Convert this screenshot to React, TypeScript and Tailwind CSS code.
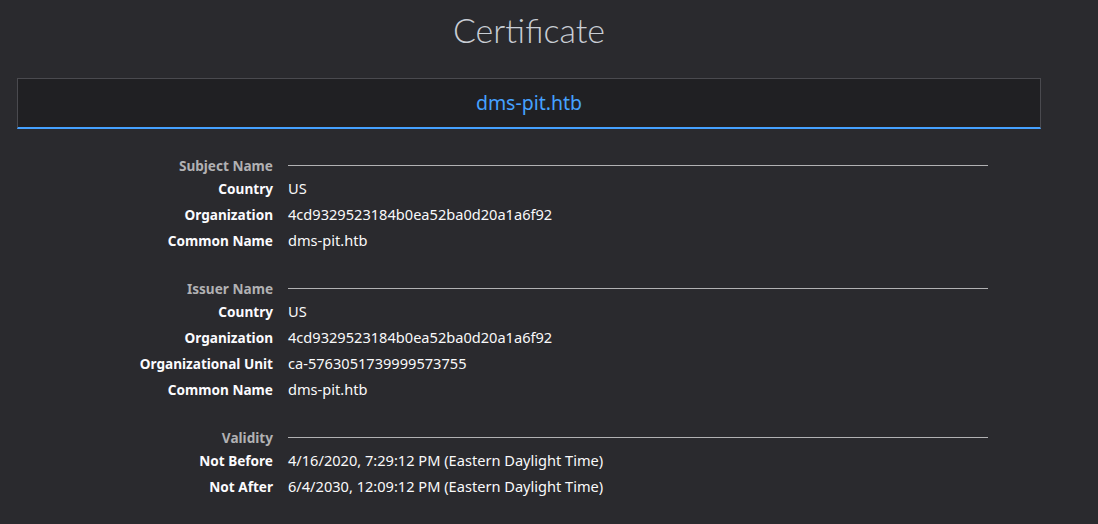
import React from "react";

type Row = [string, string];

function Section({ title, rows }: { title: string; rows: Row[] }) {
  return (
    <div className="flex flex-col">
      <div className="grid grid-cols-[256px_700px] gap-x-[15px] h-[20px] items-center">
        <div className="text-right font-bold text-[13.6px] text-[#b1b1b3] leading-none whitespace-nowrap">{title}</div>
        <div className="h-px bg-[#b1b1b3] mt-[-2px]" />
      </div>
      {rows.map(([k, v]) => (
        <div key={k} className="grid grid-cols-[256px_700px] gap-x-[15px] h-[26px] items-baseline">
          <div className="text-right font-bold text-[13.6px] text-[#fbfbfe] leading-[25px] whitespace-nowrap">{k}</div>
          <div className="text-[14.6px] text-[#f9f9fa] leading-[25px] whitespace-nowrap">{v}</div>
        </div>
      ))}
    </div>
  );
}

export default function App() {
  return (
    <div
      className="w-[1098px] h-[524px] bg-[#2a2a2e] overflow-hidden"
      style={{ fontFamily: '"Noto Sans", "Open Sans", sans-serif' }}
    >
      <div className="w-[1058px] flex flex-col">
        <div className="h-[60px] flex items-center justify-center">
          <h1 className="text-[34px] font-light text-[#c8cdd4] leading-none" style={{ fontFamily: '"Lato", "Noto Sans", sans-serif' }}>
            Certificate
          </h1>
        </div>
        <div className="ml-[17px] mt-[18px] w-[1024px] h-[51px] bg-[#202023] border-t border-l border-r border-[#4a4a4f] border-b-2 border-b-[#45a1ff] flex items-center justify-center">
          <span className="text-[19.5px] text-[#45a1ff] leading-none">dms-pit.htb</span>
        </div>
        <div className="ml-[17px] mt-[27px] flex flex-col gap-[25px]">
          <Section
            title="Subject Name"
            rows={[
              ["Country", "US"],
              ["Organization", "4cd9329523184b0ea52ba0d20a1a6f92"],
              ["Common Name", "dms-pit.htb"],
            ]}
          />
          <Section
            title="Issuer Name"
            rows={[
              ["Country", "US"],
              ["Organization", "4cd9329523184b0ea52ba0d20a1a6f92"],
              ["Organizational Unit", "ca-5763051739999573755"],
              ["Common Name", "dms-pit.htb"],
            ]}
          />
          <Section
            title="Validity"
            rows={[
              ["Not Before", "4/16/2020, 7:29:12 PM (Eastern Daylight Time)"],
              ["Not After", "6/4/2030, 12:09:12 PM (Eastern Daylight Time)"],
            ]}
          />
        </div>
      </div>
    </div>
  );
}
